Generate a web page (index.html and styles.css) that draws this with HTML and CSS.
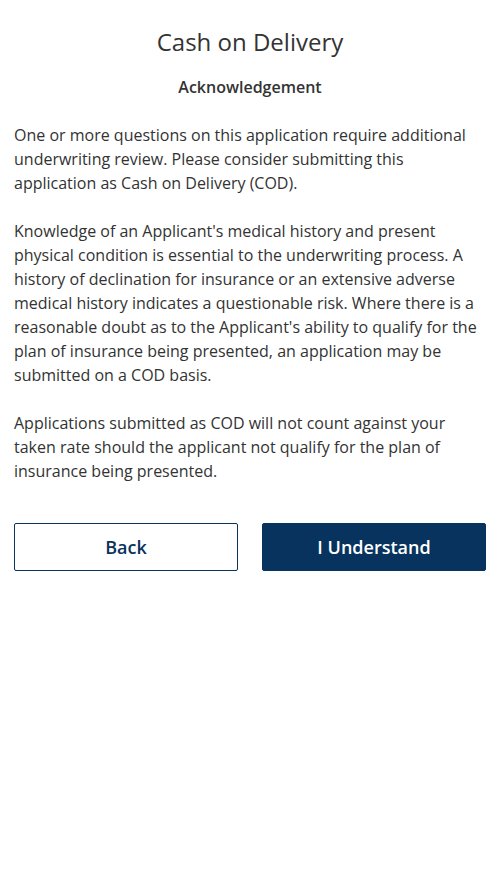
FILE: index.html
```html
<!DOCTYPE html>
<html>
<head>
<meta charset="utf-8">
<link rel="stylesheet" href="styles.css">
</head>
<body>
<main class="page">
  <h1 class="title">Cash on Delivery</h1>
  <h2 class="subtitle">Acknowledgement</h2>
  <div class="body">
    <p>One or more questions on this application require additional underwriting review. Please consider submitting this application as Cash on Delivery (COD).</p>
    <p>Knowledge of an Applicant's medical history and present physical condition is essential to the underwriting process. A history of declination for insurance or an extensive adverse medical history indicates a questionable risk. Where there is a reasonable doubt as to the Applicant's ability to qualify for the plan of insurance being presented, an application may be submitted on a COD basis.</p>
    <p>Applications submitted as COD will not count against your taken rate should the applicant not qualify for the plan of insurance being presented.</p>
  </div>
  <div class="actions">
    <button class="btn btn-outline">Back</button>
    <button class="btn btn-primary">I Understand</button>
  </div>
</main>
</body>
</html>
```

FILE: styles.css
```css
* { box-sizing: border-box; }
html, body { margin: 0; padding: 0; background: #fff; }
body {
  font-family: "Open Sans", "Noto Sans", sans-serif;
  color: #333;
  width: 500px;
}
.page {
  padding: 26px 14px 0;
}
.title {
  margin: 0;
  font-size: 24px;
  line-height: 32px;
  font-weight: 400;
  text-align: center;
  color: #333;
}
.subtitle {
  margin: 17px 0 0;
  font-size: 16px;
  line-height: 24px;
  font-weight: 600;
  text-align: center;
  color: #333;
}
.body {
  margin-top: 24px;
  font-size: 16px;
  line-height: 24px;
}
.body p { margin: 0 0 24px; }
.body p:last-child { margin-bottom: 0; }
.actions {
  margin-top: 40px;
  display: grid;
  grid-template-columns: 1fr 1fr;
  gap: 24px;
}
.btn {
  height: 48px;
  border-radius: 2px;
  font-family: "Open Sans", "Noto Sans", sans-serif;
  font-size: 18px;
  font-weight: 600;
  cursor: pointer;
}
.btn-outline {
  background: #fff;
  color: #0a335c;
  border: 1px solid #0a335c;
}
.btn-primary {
  background: #08335e;
  color: #fff;
  border: 1px solid #08335e;
}
```
